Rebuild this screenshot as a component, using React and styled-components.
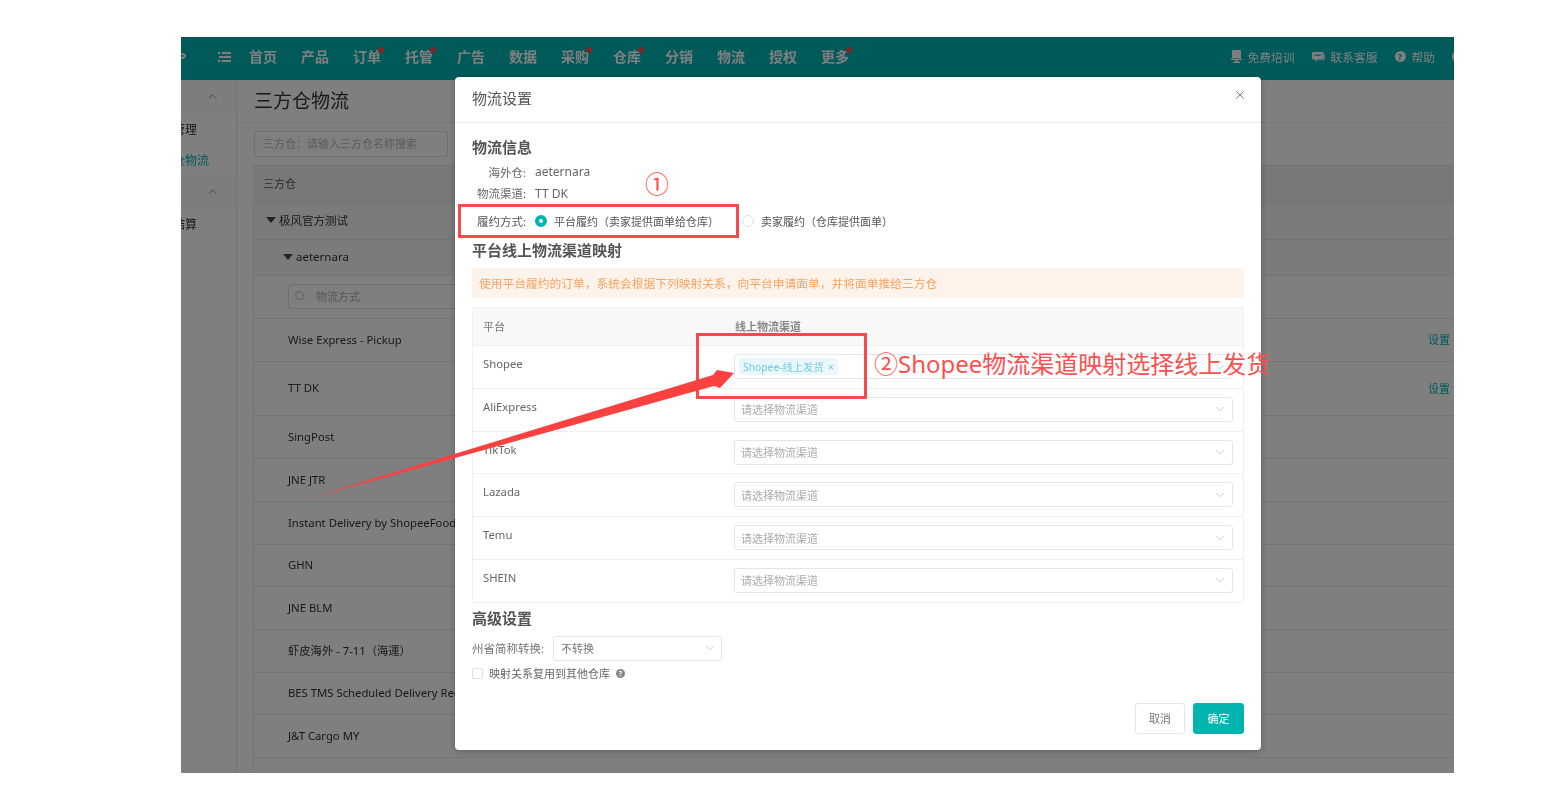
import React from "react";
import styled, { createGlobalStyle } from "styled-components";
import { ChevronUp, ChevronDown, Search, X } from "lucide-react";

const NAV = [
  ["首页"], ["产品"], ["订单", true], ["托管", true], ["广告"], ["数据"],
  ["采购", true], ["仓库", true], ["分销"], ["物流"], ["授权"], ["更多", true],
];

const CHANNELS = [
  ["Wise Express - Pickup", 43, true],
  ["TT DK", 54, true],
  ["SingPost", 43],
  ["JNE JTR", 43],
  ["Instant Delivery by ShopeeFood", 43],
  ["GHN", 42],
  ["JNE BLM", 43],
  ["虾皮海外 - 7-11（海運）", 43],
  ["BES TMS Scheduled Delivery Request", 42],
  ["J&T Cargo MY", 43],
  ["", 43],
];

const PLATFORMS = ["AliExpress", "TikTok", "Lazada", "Temu", "SHEIN"];

const App = () => (
  <Page>
    <GlobalStyle />
    <Frame>
      <TopBar>
        <Logo>P</Logo>
        <Burger viewBox="0 0 14 12">
          <path d="M0 .5h2.4v2.2H0zM4 .5h10v2.2H4zM1 4.9h13v2.2H1zM0 9.3h2.4v2.2H0zM4 9.3h10v2.2H4z" fill="currentColor" />
        </Burger>
        <Nav>
          {NAV.map(([label, dot]) => (
            <NavItem key={label} $dot={dot}>{label}</NavItem>
          ))}
        </Nav>
        <Tools>
          <Tool>
            <svg width="11" height="13" viewBox="0 0 11 13">
              <path d="M1 1a1 1 0 0 1 1-1h7a1 1 0 0 1 1 1v7H1zM0 8.5h11V10H6.5v1.5H9V13H2v-1.5h2.5V10H0z" fill="currentColor" />
            </svg>
            免费培训
          </Tool>
          <Tool>
            <svg width="13" height="12" viewBox="0 0 13 12">
              <path d="M1 1h9.5a1 1 0 0 1 1 1v5.5a1 1 0 0 1-1 1H6L3.5 11V8.500H1a1 1 0 0 1-1-1V2a1 1 0 0 1 1-1zM2.500 3.500v1.200h6.500V3.500z" fill="currentColor" fillRule="evenodd" />
              <path d="M12.200 3H13v5.500h-1L11 10V8.200h1.200z" fill="currentColor" />
            </svg>
            联系客服
          </Tool>
          <Tool>
            <HelpDot $size={11}>?</HelpDot>
            帮助
          </Tool>
          <HelpDot $size={11} />
        </Tools>
      </TopBar>

      <Main>
        <Sidebar>
          <SideGroup><ChevronUp size={13} strokeWidth={1.2} /></SideGroup>
          <SideLink>订单管理</SideLink>
          <SideLink $active>三方仓物流</SideLink>
          <SideGroup><ChevronUp size={13} strokeWidth={1.2} /></SideGroup>
          <SideLink>账单结算</SideLink>
        </Sidebar>

        <Content>
          <PageTitle>三方仓物流</PageTitle>
          <FilterRow>
            <FilterInput>三方仓：请输入三方仓名称搜索</FilterInput>
          </FilterRow>
          <BgTable>
            <BgHead>三方仓</BgHead>
            <BgGroup $h={36} $indent={12} $lift={3}><Caret />极风官方测试</BgGroup>
            <BgGroup $h={36} $indent={29} $lift={2}><Caret />aeternara</BgGroup>
            <BgRow $h={43}>
              <BgSearch>
                <Search size={12} strokeWidth={1.4} />
                物流方式
              </BgSearch>
            </BgRow>
            {CHANNELS.map(([name, h, link], i) => (
              <BgRow key={i} $h={h}>
                <span>{name}</span>
                {link && <BgLink>设置</BgLink>}
              </BgRow>
            ))}
          </BgTable>
        </Content>
      </Main>

      <Overlay />

      <Modal>
        <ModalHeader>
          物流设置
          <CloseBtn><X size={14} strokeWidth={1.3} /></CloseBtn>
        </ModalHeader>

        <ModalBody>
          <SectionTitle>物流信息</SectionTitle>
          <InfoRows>
            <InfoRow $h={21}><InfoLabel>海外仓:</InfoLabel><InfoValue>aeternara</InfoValue></InfoRow>
            <InfoRow $h={22}><InfoLabel>物流渠道:</InfoLabel><InfoValue>TT DK</InfoValue></InfoRow>
            <RadioRow>
              <InfoLabel>履约方式:</InfoLabel>
              <RadioOption $w={198}><Radio $on />平台履约（卖家提供面单给仓库）</RadioOption>
              <RadioOption><Radio />卖家履约（仓库提供面单）</RadioOption>
            </RadioRow>
          </InfoRows>

          <MappingTitle>平台线上物流渠道映射</MappingTitle>
          <Alert>使用平台履约的订单，系统会根据下列映射关系，向平台申请面单，并将面单推给三方仓</Alert>

          <MapTable>
            <MapHead>
              <MapHeadCell>平台</MapHeadCell>
              <MapHeadCell>线上物流渠道</MapHeadCell>
            </MapHead>
            <MapRow>
              <MapName>Shopee</MapName>
              <Select>
                <Tag>Shopee-线上发货<TagClose>×</TagClose></Tag>
                <ChevronDown size={14} strokeWidth={1} />
              </Select>
            </MapRow>
            {PLATFORMS.map((name) => (
              <MapRow key={name}>
                <MapName>{name}</MapName>
                <Select>
                  <Placeholder>请选择物流渠道</Placeholder>
                  <ChevronDown size={14} strokeWidth={1} />
                </Select>
              </MapRow>
            ))}
          </MapTable>

          <AdvancedTitle>高级设置</AdvancedTitle>
          <AdvancedRow>
            <AdvancedLabel>州省简称转换:</AdvancedLabel>
            <SmallSelect>
              不转换
              <ChevronDown size={14} strokeWidth={1} />
            </SmallSelect>
          </AdvancedRow>
          <CheckRow>
            <Checkbox />
            映射关系复用到其他仓库
            <HelpDot $size={9} $light>?</HelpDot>
          </CheckRow>
        </ModalBody>

        <ModalFooter>
          <CancelBtn>取消</CancelBtn>
          <OkBtn>确定</OkBtn>
        </ModalFooter>
      </Modal>
    </Frame>

    <Callout1>①</Callout1>
    <RedBox $x={458} $y={204} $w={281} $h={34} />
    <RedBox $x={696} $y={333} $w={171} $h={66} />
    <Callout2>②Shopee物流渠道映射选择线上发货</Callout2>
    <ArrowSvg viewBox="0 0 1564 808">
      <defs>
        <linearGradient id="fade" x1="297" y1="502" x2="360" y2="482" gradientUnits="userSpaceOnUse">
          <stop offset="0" stopColor="#fb4040" stopOpacity="0.2" />
          <stop offset="1" stopColor="#fb4040" />
        </linearGradient>
      </defs>
      <polygon points="297,502 713,375 717,370 734,373 720,388 714,386" fill="url(#fade)" />
    </ArrowSvg>
  </Page>
);

export default App;

const GlobalStyle = createGlobalStyle`
  html, body {
    margin: 0;
    background: #fff;
    font-family: "Noto Sans", "Noto Sans CJK SC", sans-serif;
  }
`;

const Page = styled.div`
  position: relative;
  width: 1564px;
  height: 808px;
  overflow: hidden;
  padding: 37px 110px 35px 181px;
  box-sizing: border-box;
`;

const Frame = styled.div`
  position: relative;
  height: 100%;
  display: flex;
  flex-direction: column;
  overflow: hidden;
  background: #fff;
  filter: blur(0.35px);
`;

const TopBar = styled.div`
  flex: 0 0 43px;
  box-sizing: border-box;
  padding-bottom: 4px;
  display: flex;
  align-items: center;
  background: #00b4b4;
  color: #fff;
`;

const Logo = styled.div`
  width: 36px;
  margin-left: -4px;
  font-size: 15px;
  font-weight: 700;
`;

const Burger = styled.svg`
  width: 13px;
  height: 12px;
  margin-left: 5px;
`;

const Nav = styled.div`
  display: flex;
  gap: 24px;
  margin-left: 18px;
`;

const NavItem = styled.div`
  position: relative;
  width: 28px;
  font-size: 14px;
  font-weight: 700;
  line-height: 20px;
  white-space: nowrap;

  &::after {
    content: "";
    display: ${(p) => (p.$dot ? "block" : "none")};
    position: absolute;
    top: 0;
    right: -3px;
    width: 6px;
    height: 6px;
    border-radius: 50%;
    background: #ff4d4f;
  }
`;

const Tools = styled.div`
  margin-left: auto;
  margin-right: -9px;
  display: flex;
  align-items: center;
  gap: 17px;
`;

const Tool = styled.div`
  display: flex;
  align-items: center;
  gap: 6px;
  font-size: 11.75px;
  line-height: 16px;
`;

const HelpDot = styled.span`
  display: inline-flex;
  align-items: center;
  justify-content: center;
  flex: none;
  width: ${(p) => p.$size}px;
  height: ${(p) => p.$size}px;
  border-radius: 50%;
  background: ${(p) => (p.$light ? "#888" : "#fff")};
  color: ${(p) => (p.$light ? "#fff" : "#00b4b4")};
  font-size: ${(p) => p.$size - 2}px;
  font-weight: 700;
  line-height: 1;
`;

const Main = styled.div`
  flex: 1;
  display: flex;
  min-height: 0;
`;

const Sidebar = styled.div`
  flex: 0 0 55px;
  border-right: 1px solid #e4e6ea;
  background: #fff;
  overflow: hidden;
  display: flex;
  flex-direction: column;
`;

const SideGroup = styled.div`
  height: 33px;
  flex: none;
  display: flex;
  align-items: center;
  justify-content: flex-end;
  padding-right: 17px;
  background: #fafafa;
  color: #555;
`;

const SideLink = styled.div`
  flex: none;
  height: 31px;
  display: flex;
  align-items: center;
  justify-content: flex-end;
  padding-right: ${(p) => (p.$active ? 27 : 39)}px;
  font-size: 12px;
  white-space: nowrap;
  color: ${(p) => (p.$active ? "#00b4b4" : "#333")};
`;

const Content = styled.div`
  flex: 1;
  min-width: 0;
  padding: 0 0 0 16px;
  overflow: hidden;
`;

const PageTitle = styled.div`
  height: 42px;
  font-size: 19px;
  line-height: 42px;
  color: #333;
  margin-left: -16px;
  padding-left: 17px;
  border-bottom: 1px solid #eceef1;
`;

const FilterRow = styled.div`
  height: 42px;
  display: flex;
  align-items: center;
`;

const FilterInput = styled.div`
  box-sizing: border-box;
  width: 194px;
  height: 26px;
  margin-left: 1px;
  margin-top: -1px;
  padding-left: 8px;
  border: 1px solid #dcdfe6;
  border-radius: 3px;
  font-size: 11px;
  line-height: 24px;
  color: #b4b6ba;
`;

const BgTable = styled.div`
  border-left: 1px solid #e8eaee;
`;

const BgHead = styled.div`
  height: 37px;
  padding-left: 9px;
  background: #eff0f2;
  border-top: 1px solid #e4e6ea;
  border-bottom: 1px solid #e4e6ea;
  font-size: 11px;
  line-height: 36px;
  color: #555;
`;

const BgGroup = styled.div`
  box-sizing: border-box;
  height: ${(p) => p.$h}px;
  display: flex;
  align-items: center;
  gap: 3px;
  padding-left: ${(p) => p.$indent}px;
  padding-bottom: ${(p) => p.$lift}px;
  background: #f7f7f8;
  border-bottom: 1px solid #e4e6ea;
  font-size: 11.5px;
  color: #333;
`;

const Caret = styled.i`
  width: 0;
  height: 0;
  border-left: 5px solid transparent;
  border-right: 5px solid transparent;
  border-top: 6px solid #444;
`;

const BgRow = styled.div`
  box-sizing: border-box;
  height: ${(p) => p.$h}px;
  display: flex;
  align-items: center;
  justify-content: space-between;
  padding-left: 34px;
  padding-bottom: 2px;
  border-bottom: 1px solid #e4e6ea;
  font-size: 11.3px;
  white-space: nowrap;
  color: #333;
`;

const BgSearch = styled.div`
  box-sizing: border-box;
  width: 180px;
  height: 25px;
  display: flex;
  align-items: center;
  gap: 10px;
  padding-left: 5px;
  border: 1px solid #dcdfe6;
  border-radius: 3px;
  font-size: 11px;
  color: #aaa;
`;

const BgLink = styled.span`
  margin-right: 4px;
  font-size: 11px;
  color: #00b4b4;
`;

const Overlay = styled.div`
  position: absolute;
  inset: 0;
  background: rgba(0, 0, 0, 0.5);
`;

const Modal = styled.div`
  position: absolute;
  left: 274px;
  top: 40px;
  width: 806px;
  height: 673px;
  display: flex;
  flex-direction: column;
  background: #fff;
  border-radius: 4px;
  box-shadow: 0 1px 6px rgba(0, 0, 0, 0.25);
`;

const ModalHeader = styled.div`
  position: relative;
  flex: 0 0 46px;
  box-sizing: border-box;
  padding-left: 17px;
  border-bottom: 1px solid #e8eaee;
  font-size: 15px;
  line-height: 42px;
  color: #555;
`;

const CloseBtn = styled.span`
  position: absolute;
  right: 14px;
  top: 11px;
  display: flex;
  color: #555;
`;

const ModalBody = styled.div`
  flex: 1;
  padding: 14px 17px 0;
`;

const SectionTitle = styled.div`
  font-size: 15px;
  font-weight: 700;
  line-height: 20px;
  color: #555;
`;

const InfoRows = styled.div`
  margin-top: 4px;
`;

const InfoRow = styled.div`
  height: ${(p) => p.$h}px;
  display: flex;
  align-items: center;
  font-size: 11.5px;
  color: #666;
`;

const InfoLabel = styled.span`
  width: 54px;
  flex: none;
  text-align: right;
  white-space: nowrap;
  font-size: 11.5px;
`;

const InfoValue = styled.span`
  margin-left: 9px;
  font-size: 12px;
`;

const RadioRow = styled.div`
  height: 34px;
  display: flex;
  align-items: center;
  font-size: 11px;
  color: #555;
`;

const RadioOption = styled.span`
  display: flex;
  align-items: center;
  gap: 7px;
  white-space: nowrap;
  flex: none;
  width: ${(p) => (p.$w ? `${p.$w}px` : "auto")};
  margin-left: 9px;
`;

const Radio = styled.i`
  box-sizing: border-box;
  width: 12px;
  height: 12px;
  border-radius: 50%;
  background: #fff;
  border: ${(p) => (p.$on ? "4px solid #00b4b0" : "1px solid #dcdfe6")};
`;

const MappingTitle = styled(SectionTitle)`
  margin-top: 2px;
`;

const Alert = styled.div`
  height: 30px;
  margin-top: 8px;
  padding-left: 7px;
  background: #fef3ea;
  border-radius: 3px;
  font-size: 11.75px;
  line-height: 31px;
  color: #f8a35f;
`;

const MapTable = styled.div`
  margin-top: 9px;
  border: 1px solid #eef0f4;
  border-bottom: 0;
`;

const MapHead = styled.div`
  height: 37px;
  display: grid;
  grid-template-columns: 251px 1fr;
  background: #f8f8f9;
  border-bottom: 1px solid #eef0f4;
`;

const MapHeadCell = styled.div`
  padding-left: 10px;
  font-size: 11px;
  line-height: 37px;
  color: #777;
  &:last-child {
    padding-left: 11px;
    font-weight: 700;
    color: #888;
  }
`;

const MapRow = styled.div`
  box-sizing: border-box;
  height: 42.8px;
  display: grid;
  grid-template-columns: 251px 1fr;
  border-bottom: 1px solid #eef0f4;
`;

const MapName = styled.div`
  padding: 9px 0 0 10px;
  font-size: 11.3px;
  line-height: 18px;
  color: #666;
`;

const Select = styled.div`
  box-sizing: border-box;
  height: 25px;
  margin: 8px 10px 0 10px;
  padding: 0 5px 0 4px;
  display: flex;
  align-items: center;
  justify-content: space-between;
  border: 1px solid #e3e5ea;
  border-radius: 3px;
  color: #aaa;
`;

const Placeholder = styled.span`
  padding-left: 2px;
  font-size: 11px;
  color: #aaa;
`;

const Tag = styled.span`
  display: inline-flex;
  align-items: center;
  gap: 4px;
  height: 17px;
  padding: 0 4px;
  margin-bottom: 1px;
  background: #ebf8fb;
  border-radius: 3px;
  font-size: 10.3px;
  color: #72cbe3;
`;

const TagClose = styled.span`
  font-size: 11px;
  line-height: 1;
`;

const AdvancedTitle = styled(SectionTitle)`
  margin-top: 5px;
`;

const AdvancedRow = styled.div`
  margin-top: 8px;
  display: flex;
  align-items: center;
`;

const AdvancedLabel = styled.span`
  width: 81px;
  font-size: 11.5px;
  white-space: nowrap;
  color: #777;
`;

const SmallSelect = styled.div`
  box-sizing: border-box;
  width: 169px;
  height: 25px;
  padding: 0 4px 0 7px;
  display: flex;
  align-items: center;
  justify-content: space-between;
  border: 1px solid #e3e5ea;
  border-radius: 3px;
  font-size: 11px;
  color: #777;

  svg {
    color: #aaa;
  }
`;

const CheckRow = styled.div`
  margin-top: 5px;
  display: flex;
  align-items: center;
  gap: 6px;
  font-size: 11px;
  line-height: 16px;
  color: #666;
`;

const Checkbox = styled.i`
  box-sizing: border-box;
  width: 11px;
  height: 11px;
  border: 1px solid #dcdfe6;
  border-radius: 2px;
`;

const ModalFooter = styled.div`
  flex: none;
  display: flex;
  justify-content: flex-end;
  gap: 8px;
  padding: 0 17px 16px;
`;

const CancelBtn = styled.div`
  box-sizing: border-box;
  width: 50px;
  height: 31px;
  border: 1px solid #e3e5ea;
  border-radius: 3px;
  text-align: center;
  font-size: 11px;
  line-height: 29px;
  color: #777;
`;

const OkBtn = styled(CancelBtn)`
  width: 51px;
  border-color: #00b4b0;
  background: #00b4b0;
  color: #fff;
`;

const Callout1 = styled.div`
  position: absolute;
  left: 645px;
  top: 168px;
  font-size: 24px;
  line-height: 32px;
  color: #fb4a4a;
`;

const Callout2 = styled.div`
  position: absolute;
  left: 874px;
  top: 347px;
  font-size: 24px;
  line-height: 34px;
  white-space: nowrap;
  color: #fb5050;
`;

const RedBox = styled.div`
  position: absolute;
  box-sizing: border-box;
  left: ${(p) => p.$x}px;
  top: ${(p) => p.$y}px;
  width: ${(p) => p.$w}px;
  height: ${(p) => p.$h}px;
  border: 3px solid #f9494c;
`;

const ArrowSvg = styled.svg`
  position: absolute;
  left: 0;
  top: 0;
  width: 1564px;
  height: 808px;
  pointer-events: none;
`;
